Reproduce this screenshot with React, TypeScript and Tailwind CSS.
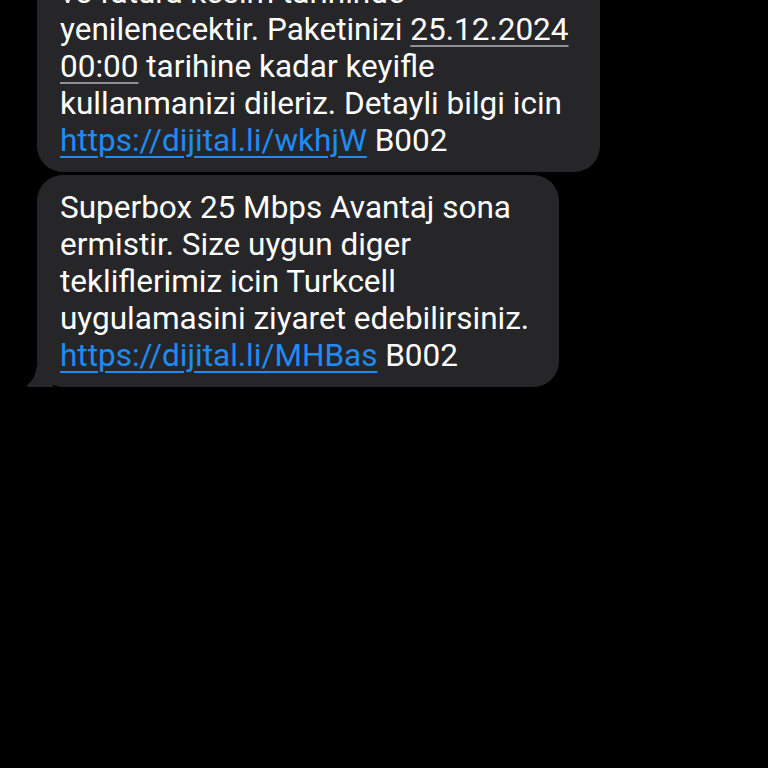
import React from "react";

// Gelen mesaj balonu (iOS Messages, karanlık tema)
const Bubble = ({
  children,
  tail,
  className = "",
}: {
  children: React.ReactNode;
  tail?: boolean;
  className?: string;
}) => (
  <div className={`relative self-start ${className}`}>
    {tail && (
      <svg
        className="absolute left-[-10px] bottom-0"
        width="26"
        height="22"
        viewBox="0 0 26 22"
      >
        <path d="M26 0 L26 22 L4 22 C1 22 -1 21 0 20 C6 16 9 9 10 0 Z" fill="#262628" />
      </svg>
    )}
    <div className="relative rounded-[26px] bg-[#262628] pl-[23px] pr-[22px] pt-[14px] pb-[13px] text-[31.5px] leading-[37px] text-white">
      {children}
    </div>
  </div>
);

const Link = ({ children }: { children: React.ReactNode }) => (
  <span className="text-[#1f8bf5] underline decoration-[2px] underline-offset-[5px]">
    {children}
  </span>
);

const DateLink = ({ children }: { children: React.ReactNode }) => (
  <span className="underline decoration-[#8e8e93] decoration-[2px] underline-offset-[5px]">
    {children}
  </span>
);

export default function App() {
  return (
    <div
      className="h-[768px] w-[768px] overflow-hidden bg-black"
      style={{ fontFamily: '"Roboto", "Liberation Sans", sans-serif' }}
    >
      <div className="flex flex-col gap-[3px] pl-[37px]">
        <Bubble className="mt-[-40px] w-[563px]">
          ve fatura kesim tarihinde
          <br />
          yenilenecektir. Paketinizi <DateLink>25.12.2024</DateLink>
          <br />
          <DateLink>00:00</DateLink> tarihine kadar keyifle
          <br />
          kullanmanizi dileriz. Detayli bilgi icin
          <br />
          <Link>https://dijital.li/wkhjW</Link> B002
        </Bubble>
        <Bubble tail className="w-[522px]">
          Superbox 25 Mbps Avantaj sona
          <br />
          ermistir. Size uygun diger
          <br />
          tekliflerimiz icin Turkcell
          <br />
          uygulamasini ziyaret edebilirsiniz.
          <br />
          <Link>https://dijital.li/MHBas</Link> B002
        </Bubble>
      </div>
    </div>
  );
}
